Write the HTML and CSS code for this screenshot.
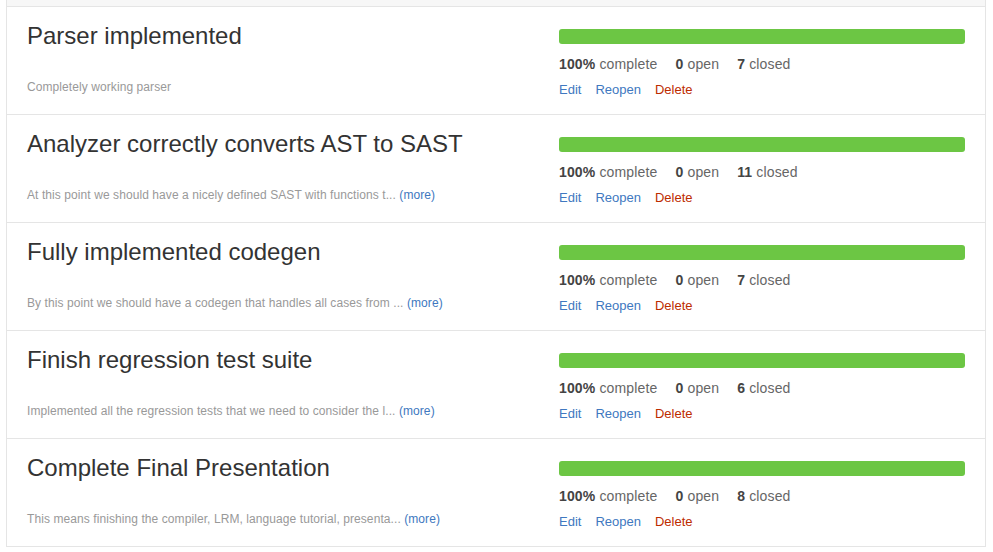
FILE: index.html
```html
<!DOCTYPE html>
<html>
<head>
<meta charset="utf-8">
<link rel="stylesheet" href="styles.css">
</head>
<body>
<div class="milestones">
  <div class="list-top"></div>
  <div class="milestone">
    <div class="info">
      <h2 class="title">Parser implemented</h2>
      <p class="desc">Completely working parser</p>
    </div>
    <div class="meta">
      <div class="progress"><span class="progress-bar" style="width:100%"></span></div>
      <div class="stats"><span class="stat"><b>100%</b> complete</span><span class="stat"><b>0</b> open</span><span class="stat"><b>7</b> closed</span></div>
      <div class="actions"><a class="act">Edit</a><a class="act">Reopen</a><a class="act danger">Delete</a></div>
    </div>
  </div>
  <div class="milestone">
    <div class="info">
      <h2 class="title">Analyzer correctly converts AST to SAST</h2>
      <p class="desc">At this point we should have a nicely defined SAST with functions t... <a class="more">(more)</a></p>
    </div>
    <div class="meta">
      <div class="progress"><span class="progress-bar" style="width:100%"></span></div>
      <div class="stats"><span class="stat"><b>100%</b> complete</span><span class="stat"><b>0</b> open</span><span class="stat"><b>11</b> closed</span></div>
      <div class="actions"><a class="act">Edit</a><a class="act">Reopen</a><a class="act danger">Delete</a></div>
    </div>
  </div>
  <div class="milestone">
    <div class="info">
      <h2 class="title">Fully implemented codegen</h2>
      <p class="desc">By this point we should have a codegen that handles all cases from ... <a class="more">(more)</a></p>
    </div>
    <div class="meta">
      <div class="progress"><span class="progress-bar" style="width:100%"></span></div>
      <div class="stats"><span class="stat"><b>100%</b> complete</span><span class="stat"><b>0</b> open</span><span class="stat"><b>7</b> closed</span></div>
      <div class="actions"><a class="act">Edit</a><a class="act">Reopen</a><a class="act danger">Delete</a></div>
    </div>
  </div>
  <div class="milestone">
    <div class="info">
      <h2 class="title">Finish regression test suite</h2>
      <p class="desc">Implemented all the regression tests that we need to consider the l... <a class="more">(more)</a></p>
    </div>
    <div class="meta">
      <div class="progress"><span class="progress-bar" style="width:100%"></span></div>
      <div class="stats"><span class="stat"><b>100%</b> complete</span><span class="stat"><b>0</b> open</span><span class="stat"><b>6</b> closed</span></div>
      <div class="actions"><a class="act">Edit</a><a class="act">Reopen</a><a class="act danger">Delete</a></div>
    </div>
  </div>
  <div class="milestone">
    <div class="info">
      <h2 class="title">Complete Final Presentation</h2>
      <p class="desc">This means finishing the compiler, LRM, language tutorial, presenta... <a class="more">(more)</a></p>
    </div>
    <div class="meta">
      <div class="progress"><span class="progress-bar" style="width:100%"></span></div>
      <div class="stats"><span class="stat"><b>100%</b> complete</span><span class="stat"><b>0</b> open</span><span class="stat"><b>8</b> closed</span></div>
      <div class="actions"><a class="act">Edit</a><a class="act">Reopen</a><a class="act danger">Delete</a></div>
    </div>
  </div>
</div>
</body>
</html>
```
FILE: styles.css
```css
* { box-sizing: border-box; }
body {
  margin: 0;
  background: #fff;
  font-family: "Liberation Sans", Arial, sans-serif;
  color: #333;
}
.milestones {
  margin-left: 6px;
  width: 980px;
  border-left: 1px solid #e5e5e5;
  border-right: 1px solid #e5e5e5;
  border-bottom: 1px solid #e5e5e5;
}
.list-top {
  height: 6px;
  background: #f7f7f7;
}
.milestone {
  height: 108px;
  border-top: 1px solid #e5e5e5;
  padding: 0 20px;
  display: grid;
  grid-template-columns: 532px 406px;
}
.info { padding-top: 14px; }
.title {
  margin: 0;
  font-size: 24px;
  line-height: 30px;
  font-weight: normal;
  color: #333;
}
.desc {
  margin: 27px 0 0;
  font-size: 12px;
  line-height: 18px;
  letter-spacing: 0.08px;
  color: #999;
}
.more { color: #4078c0; }
.meta { padding-top: 22px; }
.progress {
  height: 15px;
  background: #eee;
  border-radius: 3px;
  overflow: hidden;
  display: flex;
}
.progress-bar {
  display: block;
  height: 100%;
  background: #6cc644;
}
.stats {
  margin-top: 10px;
  font-size: 14px;
  line-height: 20px;
  letter-spacing: 0.15px;
  color: #666;
  display: flex;
  gap: 18px;
}
.stats b { color: #444; }
.actions {
  margin-top: 6px;
  font-size: 13px;
  line-height: 20px;
  display: flex;
  gap: 14px;
}
.act { color: #4078c0; }
.act.danger { color: #bd2c00; }
```
